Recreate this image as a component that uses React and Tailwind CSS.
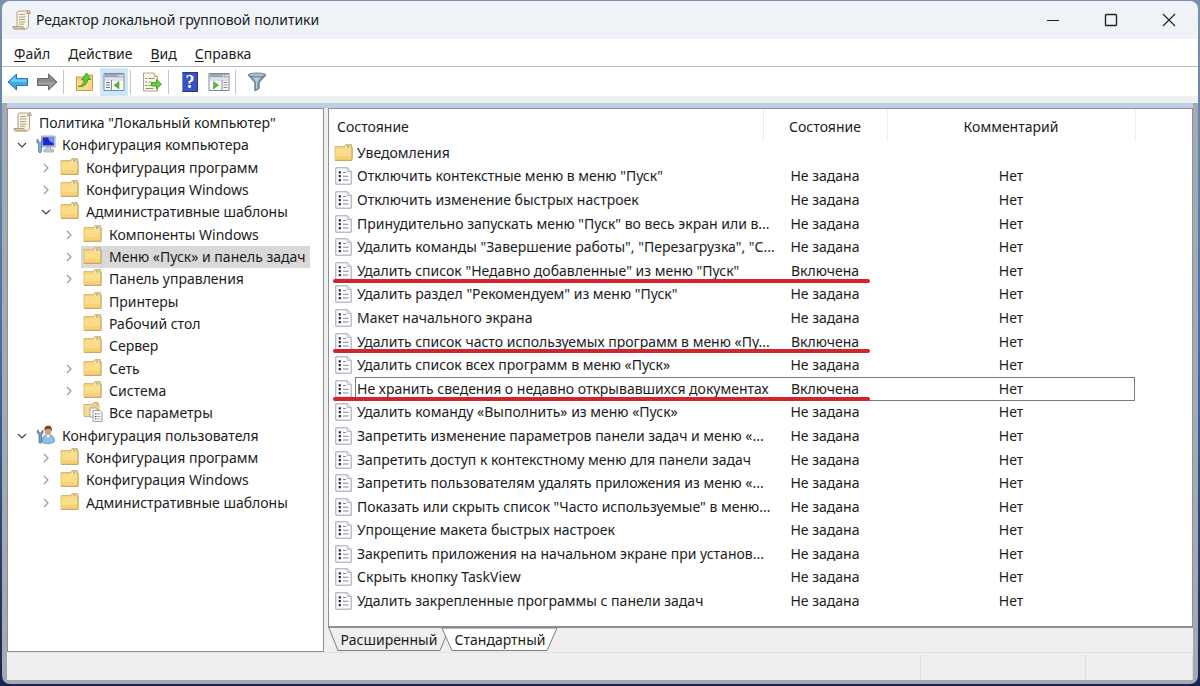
import clsx from "clsx";

const tree = [
  { level: 0, icon: "scroll", label: 'Политика "Локальный компьютер"' },
  { level: 1, icon: "computer", label: "Конфигурация компьютера", state: "open" },
  { level: 2, icon: "folder", label: "Конфигурация программ", state: "closed" },
  { level: 2, icon: "folder", label: "Конфигурация Windows", state: "closed" },
  { level: 2, icon: "folder", label: "Административные шаблоны", state: "open" },
  { level: 3, icon: "folder", label: "Компоненты Windows", state: "closed" },
  { level: 3, icon: "folder", label: "Меню «Пуск» и панель задач", state: "closed", selected: true },
  { level: 3, icon: "folder", label: "Панель управления", state: "closed" },
  { level: 3, icon: "folder", label: "Принтеры" },
  { level: 3, icon: "folder", label: "Рабочий стол" },
  { level: 3, icon: "folder", label: "Сервер" },
  { level: 3, icon: "folder", label: "Сеть", state: "closed" },
  { level: 3, icon: "folder", label: "Система", state: "closed" },
  { level: 3, icon: "all", label: "Все параметры" },
  { level: 1, icon: "user", label: "Конфигурация пользователя", state: "open" },
  { level: 2, icon: "folder", label: "Конфигурация программ", state: "closed" },
  { level: 2, icon: "folder", label: "Конфигурация Windows", state: "closed" },
  { level: 2, icon: "folder", label: "Административные шаблоны", state: "closed" },
];

const OFF = "Не задана";
const ON = "Включена";

const policies = [
  { name: "Уведомления", folder: true },
  { name: 'Отключить контекстные меню в меню "Пуск"', status: OFF },
  { name: "Отключить изменение быстрых настроек", status: OFF },
  { name: 'Принудительно запускать меню "Пуск" во весь экран или в...', status: OFF },
  { name: 'Удалить команды "Завершение работы", "Перезагрузка", "С...', status: OFF },
  { name: 'Удалить список "Недавно добавленные" из меню "Пуск"', status: ON, marked: true },
  { name: 'Удалить раздел "Рекомендуем" из меню "Пуск"', status: OFF },
  { name: "Макет начального экрана", status: OFF },
  { name: "Удалить список часто используемых программ в меню «Пу...", status: ON, marked: true },
  { name: "Удалить список всех программ в меню «Пуск»", status: OFF },
  { name: "Не хранить сведения о недавно открывавшихся документах", status: ON, marked: true, focused: true },
  { name: "Удалить команду «Выполнить» из меню «Пуск»", status: OFF },
  { name: "Запретить изменение параметров панели задач и меню «...", status: OFF },
  { name: "Запретить доступ к контекстному меню для панели задач", status: OFF },
  { name: "Запретить пользователям удалять приложения из меню «...", status: OFF },
  { name: 'Показать или скрыть список "Часто используемые" в меню...', status: OFF },
  { name: "Упрощение макета быстрых настроек", status: OFF },
  { name: "Закрепить приложения на начальном экране при установ...", status: OFF },
  { name: "Скрыть кнопку TaskView", status: OFF },
  { name: "Удалить закрепленные программы с панели задач", status: OFF },
];

const indents = ["pl-[3px]", "pl-2", "pl-8", "pl-[55px]"];

function ScrollIcon() {
  return (
    <svg width="20" height="20" viewBox="0 0 20 20">
      <path d="M5 2.500C5 1.500 6 1 7 1h10.500c-1 .5-1 1.500-1 2.500v12c0 2-1 3.500-3 3.500H3c-1.500 0-2-1-2-2.500h4z" fill="#fbf3dc" stroke="#a3977a" strokeWidth="0.9" />
      <path d="M14.500 3.500c0-1.500.7-2.500 2-2.500s2 1 1.800 2.500z" fill="#d6c597" stroke="#a3977a" strokeWidth="0.8" />
      <path d="M1.200 16.500h9.800c0 1.500.8 2.300 2 2.400H3c-1.200 0-1.800-1-1.800-2.400z" fill="#dccb9c" stroke="#a3977a" strokeWidth="0.8" />
      <path d="M7 4.500h6M7 7h6.500M7 9.500h6M7 12h6.500M7 14.200h5" stroke="#9a9a92" strokeWidth="0.9" />
    </svg>
  );
}

function FolderIcon() {
  return (
    <svg width="20" height="18" viewBox="0 0 20 18">
      <path d="M1 2.500h9l2-2h5.500v2H18v13.800H1z" fill="#f3d27a" stroke="#d0ad62" strokeWidth="0.8" />
      <path d="M10.800 3.300l1.500-1.600h4.400v2.600h-5z" fill="#fff8dc" stroke="#c8a458" strokeWidth="0.5" />
      <path d="M13 2.300h2.400v1.100H13z" fill="#6d9bb4" />
      <path d="M1.500 4.500h9l1.200-.5h6v12H1.500z" fill="#fbdd89" />
      <path d="M1.500 12h16.200v4H1.500z" fill="#f7d274" />
      <path d="M1 16.300h17V3" fill="none" stroke="#c09c58" strokeWidth="0.9" />
    </svg>
  );
}

function ComputerIcon() {
  return (
    <svg width="20" height="20" viewBox="0 0 20 20">
      <path d="M5.500 2h13.500v11H5.500z" fill="#d6dbe4" stroke="#8790a5" strokeWidth="0.8" />
      <path d="M6.700 3.200h11.100v8.200H6.700z" fill="#1a2bc9" />
      <path d="M12 3.200h5.800v6c-3-.5-5-2.500-5.800-6z" fill="#6f96f5" />
      <path d="M10.500 13h4v2.500h3V18H8v-2.500h2.500z" fill="#c6ccd4" stroke="#858d98" strokeWidth="0.6" />
      <path d="M1 5v3.500L2.500 10v7.500c0 1.500 3 1.500 3 0V10L7 8.500V5L5.500 6.500v1.800h-3V6.500z" fill="#7fb1d8" stroke="#42678f" strokeWidth="0.7" />
    </svg>
  );
}

function UserIcon() {
  return (
    <svg width="20" height="20" viewBox="0 0 20 20">
      <path d="M6 17c0-5 2-7.500 6-7.500s6.500 2.500 6.500 7c-2 2.500-10 3-12.500.5z" fill="#8fc0e6" stroke="#4c7fae" strokeWidth="0.7" />
      <path d="M10 10l2 3 2.500-3z" fill="#f5f8fb" />
      <ellipse cx="12" cy="6" rx="3.200" ry="4" fill="#d9a077" />
      <path d="M8.500 5.500C8 2 10 .8 12.300.8S16.500 2.500 15.800 7c-.6-2-1.200-3-2.300-3.200-2 .2-3.500.2-5 1.700z" fill="#6b4630" />
      <path d="M1.500 5v3.200L3 9.800v7.400c0 1.300 2.600 1.300 2.600 0V9.800L7 8.200V5L5.600 6.300v1.600H3V6.300z" fill="#7fa3c4" stroke="#3f5f80" strokeWidth="0.7" />
    </svg>
  );
}

function AllSettingsIcon() {
  return (
    <svg width="20" height="20" viewBox="0 0 20 20">
      <path d="M1 2.500h8l2-2h4v2h1v12H1z" fill="#f8db8c" stroke="#c8a458" strokeWidth="0.8" />
      <path d="M10 3.200l1-1.500h3v2h-4z" fill="#fff8dc" stroke="#b7954c" strokeWidth="0.5" />
      <path d="M7 6h7v9H7z" fill="#fff" stroke="#8f959e" strokeWidth="0.8" />
      <path d="M10 8.500h7l2 2v9h-9z" fill="#fff" stroke="#7f858e" strokeWidth="0.8" />
      <path d="M12 12h1.500M12 14.500h1.500M12 17h1.500" stroke="#333" strokeWidth="1.200" />
      <path d="M14.500 12h3M14.500 14.500h3M14.500 17h3" stroke="#8d97a5" strokeWidth="0.9" />
    </svg>
  );
}

function PolicyIcon() {
  return (
    <svg width="18" height="18" viewBox="0 0 18 18">
      <path d="M.8.8h11.400l4 3.500v12.900H.8z" fill="#fdfdfd" stroke="#9297a0" strokeWidth="0.9" />
      <path d="M12.200.8v3.700h4" fill="#e4e7ec" stroke="#a9adb5" strokeWidth="0.7" />
      <path d="M3.700 4.200h2.200v2.200H3.700zM3.700 8h2.200v2.200H3.700zM3.700 12h2.200v2.200H3.700z" fill="#2b2b38" />
      <path d="M8 5.500h3M8 9.200h5.500M8 13h5.500" stroke="#7c88a0" strokeWidth="1.100" />
    </svg>
  );
}

function ArrowIcon({ forward }) {
  return (
    <svg width="22" height="20" viewBox="0 0 22 20" className={clsx(forward && "rotate-180")}>
      <path
        d="M1 10L9.500 2v4.500h11v7h-11V18z"
        fill={forward ? "#8c8c8c" : "#3fa9ea"}
        stroke={forward ? "#686868" : "#2378b4"}
        strokeWidth="1"
        strokeLinejoin="round"
      />
      <path d="M3 9.700L8.500 4.500v3h11v2.200z" fill={forward ? "#a3a3a3" : "#79cbf7"} />
    </svg>
  );
}

function UpFolderIcon() {
  return (
    <svg width="20" height="20" viewBox="0 0 20 20">
      <path d="M1.500 5h8l2-2h6v15.500h-16z" fill="#f5d06f" stroke="#bd953f" strokeWidth="0.9" />
      <path d="M2 8h15v10H2z" fill="#f9db86" />
      <path d="M3.500 14.500c3.500-.5 5.500-3 5.800-6.500H6.500L11.500 1l4 6.500h-2.800c-.2 4.500-4 7.500-9.200 7z" fill="#5ecb3d" stroke="#318c1f" strokeWidth="0.8" />
    </svg>
  );
}

function PaneIcon({ right }) {
  return (
    <svg width="22" height="20" viewBox="0 0 22 20">
      <path d="M1 1.500h20v17H1z" fill="#fbfbfc" stroke="#7f8793" strokeWidth="1" />
      <path d="M1.500 2h19v3.500h-19z" fill="#9fa9b6" />
      <path d="M15 3.700h1.200M17.200 3.700h1.200M19 3.700h1" stroke="#fff" strokeWidth="1.200" />
      <path d="M1.500 7h19M1.500 8.200h19" stroke="#bcc3cc" strokeWidth="0.7" />
      {right ? (
        <>
          <path d="M14 8v10.500" stroke="#7f8793" />
          <path d="M15.500 10.500h4M15.500 13h4M15.500 15.500h4" stroke="#7d8ea6" strokeWidth="1.200" />
          <path d="M5.500 9.500l5 3.700-5 3.700z" fill="#55bb3f" stroke="#318c1f" strokeWidth="0.5" />
        </>
      ) : (
        <>
          <path d="M8.500 8v10.500" stroke="#7f8793" />
          <path d="M3 10.500h4M3 13h4M3 15.500h4" stroke="#5579a5" strokeWidth="1.200" />
          <path d="M16 9.500l-5 3.700 5 3.700z" fill="#55bb3f" stroke="#318c1f" strokeWidth="0.5" />
        </>
      )}
    </svg>
  );
}

function ExportIcon() {
  return (
    <svg width="20" height="20" viewBox="0 0 20 20">
      <path d="M1.500 1h10.500l3.500 3.500v14.500h-14z" fill="#fdf8e2" stroke="#a69d80" strokeWidth="0.9" />
      <path d="M12 1v3.500h3.500" fill="#e8e0c2" stroke="#a69d80" strokeWidth="0.7" />
      <path d="M3.500 6.500H5M3.500 10H5M3.500 13.500H5" stroke="#555" strokeWidth="1.200" />
      <path d="M6.500 6.500h6M6.500 10h3M6.500 13.500h3M3.500 16.500h8" stroke="#8d8d85" strokeWidth="1" />
      <path d="M9.500 10.500h5V7.500l5 4.700-5 4.800v-3h-5z" fill="#63ce40" stroke="#359520" strokeWidth="0.8" />
    </svg>
  );
}

function HelpIcon() {
  return (
    <span className="flex h-5 w-4 items-center justify-center border border-[#24368c] border-l-[#7c8fdd] bg-[#3a52bd] font-['Liberation_Serif',serif] text-lg leading-4 font-bold text-white">
      ?
    </span>
  );
}

function FilterIcon() {
  return (
    <svg width="20" height="20" viewBox="0 0 20 20">
      <path d="M1 3l6.800 7.500V19l4.400-2.500v-6L19 3z" fill="#7d98ab" stroke="#5a7183" strokeWidth="0.9" />
      <path d="M9 10V17l1.300-.8V10L14 5H6z" fill="#b9ccd8" />
      <ellipse cx="10" cy="3" rx="9" ry="2" fill="#a8bccb" stroke="#5a7183" strokeWidth="0.8" />
    </svg>
  );
}

function Chevron({ open }) {
  return (
    <svg width="12" height="12" viewBox="0 0 12 12" fill="none">
      {open ? (
        <path d="M2 4l4 4 4-4" stroke="#444" strokeWidth="1.200" />
      ) : (
        <path d="M4 2l4 4-4 4" stroke="#9a9a9a" strokeWidth="1.200" />
      )}
    </svg>
  );
}

const treeIcons = {
  scroll: ScrollIcon,
  folder: FolderIcon,
  computer: ComputerIcon,
  user: UserIcon,
  all: AllSettingsIcon,
};

function TitleBar() {
  return (
    <header className="flex h-[38px] items-stretch bg-[#eff3f8]">
      <div className="flex flex-1 items-center gap-1 pl-[10px]">
        <ScrollIcon />
        <h1 className="text-sm">Редактор локальной групповой политики</h1>
      </div>
      <button type="button" aria-label="Свернуть" className="flex w-[58px] items-center justify-center">
        <svg width="14" height="14" viewBox="0 0 14 14">
          <path d="M1 7.500h12" stroke="#222" />
        </svg>
      </button>
      <button type="button" aria-label="Развернуть" className="flex w-[58px] items-center justify-center">
        <svg width="14" height="14" viewBox="0 0 14 14">
          <rect x="1.500" y="1.500" width="11" height="11" rx="1" fill="none" stroke="#222" strokeWidth="1.400" />
        </svg>
      </button>
      <button type="button" aria-label="Закрыть" className="flex w-[58px] items-center justify-center">
        <svg width="14" height="14" viewBox="0 0 14 14">
          <path d="M1 1l12 12M13 1L1 13" stroke="#222" strokeWidth="1.200" />
        </svg>
      </button>
    </header>
  );
}

function MenuBar() {
  const items = ["Файл", "Действие", "Вид", "Справка"];
  return (
    <nav className="flex h-7 items-center gap-[18px] border-b border-[#b9bdc2] bg-white pt-[2px] pl-3 text-sm">
      {items.map((item) => (
        <button key={item} type="button">
          <span className="underline underline-offset-2">{item[0]}</span>
          {item.slice(1)}
        </button>
      ))}
    </nav>
  );
}

function ToolButton({ label, active, children }) {
  return (
    <button
      type="button"
      aria-label={label}
      className={clsx("flex h-7 w-7 items-center justify-center", active && "bg-[#cde6f8]")}
    >
      {children}
    </button>
  );
}

function Separator() {
  return <div className="mr-[6px] ml-px h-6 w-px bg-[#c2c5c9]" />;
}

function Toolbar() {
  return (
    <div className="flex h-[29px] items-center gap-px bg-white pt-px pl-[2px]">
      <ToolButton label="Назад"><ArrowIcon /></ToolButton>
      <ToolButton label="Вперёд"><ArrowIcon forward /></ToolButton>
      <Separator />
      <ToolButton label="Вверх"><UpFolderIcon /></ToolButton>
      <ToolButton label="Дерево консоли" active><PaneIcon /></ToolButton>
      <Separator />
      <ToolButton label="Экспорт списка"><ExportIcon /></ToolButton>
      <Separator />
      <ToolButton label="Справка"><HelpIcon /></ToolButton>
      <ToolButton label="Панель действий"><PaneIcon right /></ToolButton>
      <Separator />
      <ToolButton label="Фильтр"><FilterIcon /></ToolButton>
    </div>
  );
}

function ConsoleTree() {
  return (
    <aside className="w-[317px] shrink-0 border border-[#8b9099] bg-white">
      <ul className="flex h-[405px] flex-col pt-[3px] text-sm">
        {tree.map((node, i) => {
          const Icon = treeIcons[node.icon];
          return (
            <li key={i} className={clsx("flex flex-1 items-center", indents[node.level])}>
              {node.level > 0 && (
                <span className="mr-[6px] w-3">
                  {node.state && <Chevron open={node.state === "open"} />}
                </span>
              )}
              <button
                type="button"
                className={clsx(
                  "flex h-full items-center gap-[6px] pr-1 pl-[2px] whitespace-nowrap",
                  node.selected && "bg-[#d9d9d9]"
                )}
              >
                <span className="flex w-5 pb-[2px]">
                  <Icon />
                </span>
                {node.label}
              </button>
            </li>
          );
        })}
      </ul>
    </aside>
  );
}

function PolicyTable() {
  return (
    <table className="h-[504px] w-full table-fixed border-collapse text-sm whitespace-nowrap">
      <colgroup>
        <col className="w-[434px]" />
        <col className="w-[124px]" />
        <col className="w-[248px]" />
        <col />
      </colgroup>
      <thead>
        <tr className="h-8">
          <th className="border-r border-[#ececec] pt-1 pl-2 text-left font-normal">Состояние</th>
          <th className="border-r border-[#ececec] pt-1 font-normal">Состояние</th>
          <th className="border-r border-[#ececec] pt-1 font-normal">Комментарий</th>
          <td />
        </tr>
      </thead>
      <tbody>
        {policies.map((policy) => (
          <tr key={policy.name}>
            <td className="relative p-0">
              <div className="flex items-center gap-[3px] pl-[5px]">
                <span className="flex w-5 shrink-0 justify-center">
                  {policy.folder ? <FolderIcon /> : <PolicyIcon />}
                </span>
                {policy.name}
              </div>
              {policy.focused && (
                <span className="absolute inset-y-0 left-[26px] w-[780px] border border-[#7a7a7a]" />
              )}
              {policy.marked && (
                <span className="absolute bottom-0 left-1 h-1 w-[537px] rounded-full bg-[#d2232f]" />
              )}
            </td>
            <td className="p-0 text-center">{policy.status}</td>
            <td className="p-0 text-center">{policy.status && "Нет"}</td>
            <td />
          </tr>
        ))}
      </tbody>
    </table>
  );
}

function ViewTabs() {
  return (
    <div className="flex h-6 text-sm">
      <button type="button" className="relative flex w-[118px] items-center justify-center">
        <svg className="absolute inset-0" width="118" height="24" viewBox="0 0 118 24" fill="none">
          <path d="M1 0l9 22.500h102L118 8" stroke="#7c7c7c" />
        </svg>
        <span className="relative pl-1">Расширенный</span>
      </button>
      <button type="button" className="relative flex w-[112px] items-center justify-center">
        <svg className="absolute inset-0 overflow-visible" width="112" height="24" viewBox="0 0 112 24">
          <path d="M-4 0L6 22.500h95L111 0z" fill="#fff" stroke="#7c7c7c" />
        </svg>
        <span className="relative pr-1">Стандартный</span>
      </button>
    </div>
  );
}

function StatusBar() {
  return (
    <footer className="flex h-7 border-t border-[#e2e2e2] pt-[2px]">
      <div className="flex-1 border-r border-[#dcdcdc]" />
      <div className="w-[165px] border-r border-[#dcdcdc]" />
      <div className="w-[107px] border-r border-[#dcdcdc]" />
    </footer>
  );
}

export default function App() {
  return (
    <div className="flex min-h-screen flex-col bg-linear-to-b from-[#7b8fae] via-[#3d72a8] to-[#1a2350] px-[2px] pt-px pb-[2px] font-['Noto_Sans',sans-serif] text-[#1c1c1c]">
      <div className="flex flex-1 flex-col overflow-hidden rounded-lg bg-[#a6a9b0]">
        <TitleBar />
        <MenuBar />
        <Toolbar />
        <div className="h-[7px] bg-[#eeeff1]" />
        <div className="flex flex-1 flex-col px-[5px] pb-1">
          <div className="h-[5px] bg-[#bccde4]" />
          <div className="flex flex-1 flex-col bg-[#efefef]">
            <main className="flex flex-1 gap-1">
              <ConsoleTree />
              <section className="flex min-w-0 flex-1 flex-col">
                <div className="flex-1 border border-[#8b9099] border-b-2 bg-white">
                  <PolicyTable />
                </div>
                <ViewTabs />
              </section>
            </main>
            <StatusBar />
          </div>
        </div>
      </div>
    </div>
  );
}
